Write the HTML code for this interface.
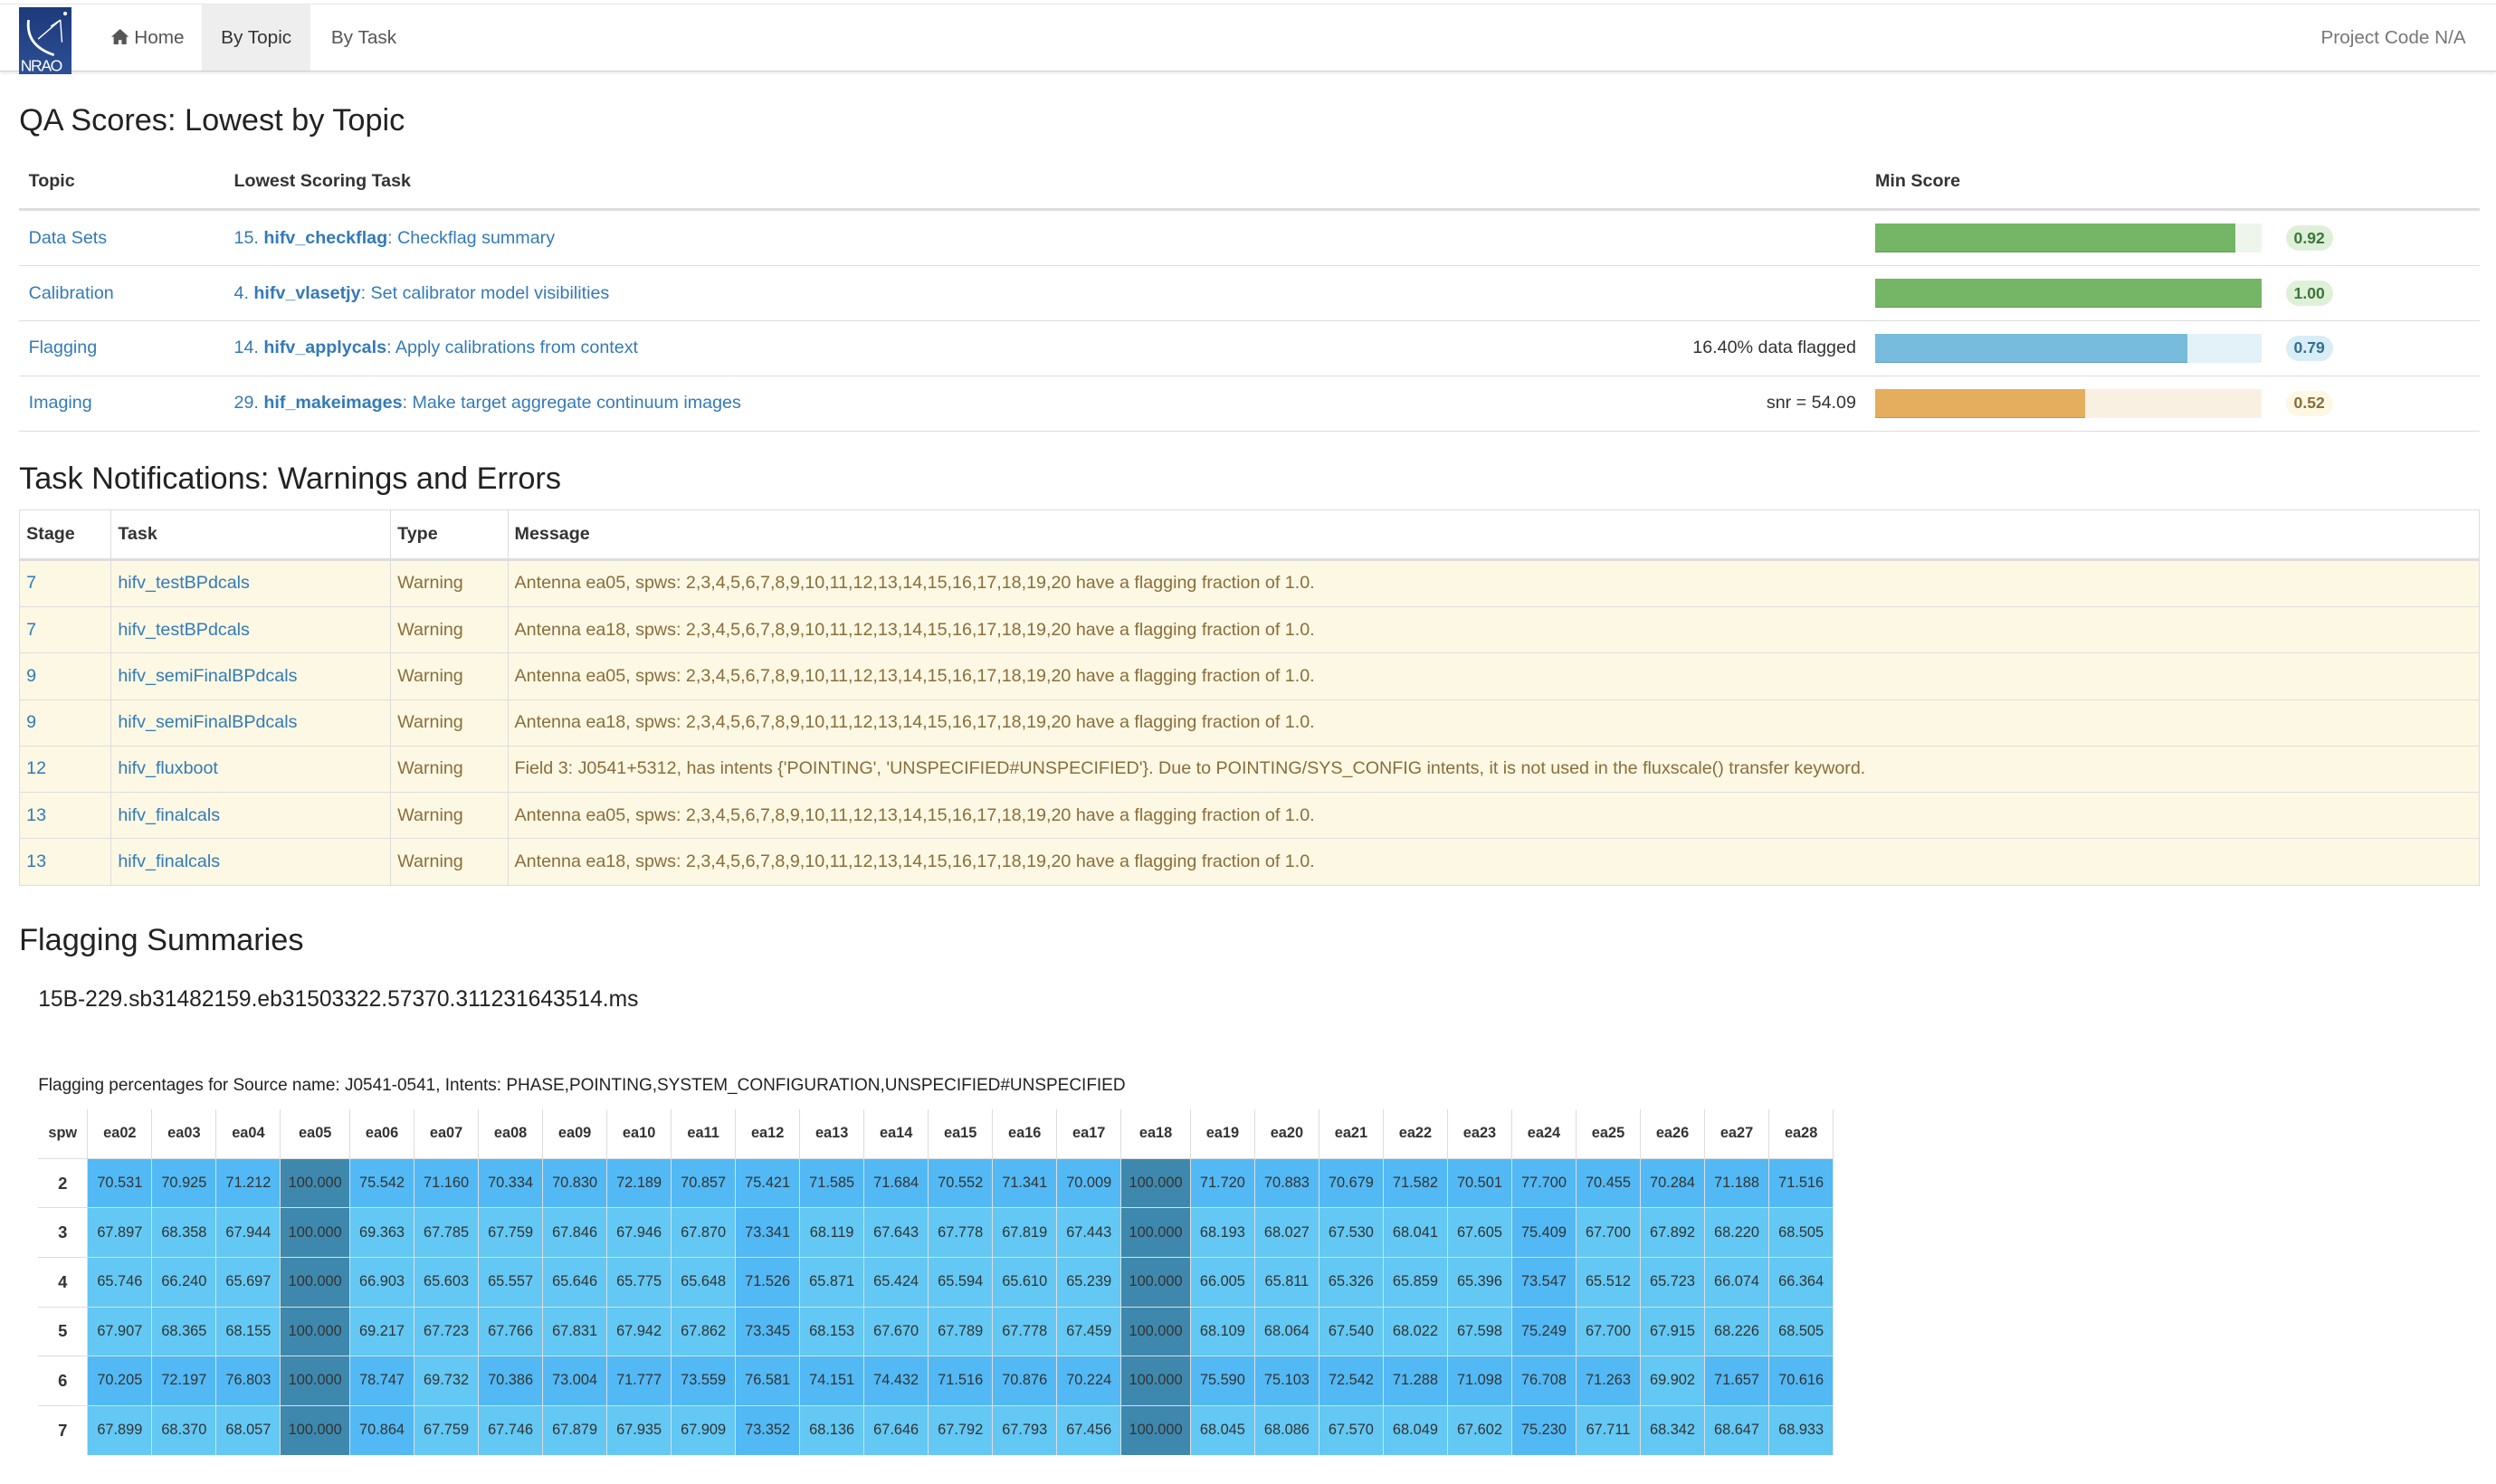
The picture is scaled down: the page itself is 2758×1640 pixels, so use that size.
<!DOCTYPE html>
<html><head><meta charset="utf-8">
<style>
html,body{margin:0;padding:0;background:#fff;}
body{zoom:1.7589;width:1568px;height:932px;position:relative;overflow:hidden;font-family:"Liberation Sans",Arial,sans-serif;color:#333;}
a{color:#337ab7;text-decoration:none}
.nav{position:absolute;left:0;top:2px;width:1568px;height:42px;border-top:1px solid #e5e5e5;border-bottom:1px solid #d0d0d0;box-shadow:0 1px 2px rgba(0,0,0,.1);}
.logo{position:absolute;left:12px;top:2px;width:33px;height:42px;background:linear-gradient(#1d3a7a,#2d4f95);}
.nav .it{position:absolute;top:0;height:42px;line-height:42px;font-size:11.8px;color:#555}
h2{position:absolute;margin:0;font-weight:normal;font-size:19.5px;color:#222;left:12px}
.qa{position:absolute;left:12px;top:97px;width:1546px;border-collapse:collapse;font-size:11.2px}
.qa th{text-align:left;height:34px;border-bottom:2px solid #ddd;padding:0 6px;font-size:11.2px}
.qa td{height:34px;border-bottom:1px solid #ddd;padding:0 6px;}
.bar{width:243px;height:18px;position:relative}
.bar i{position:absolute;left:0;top:0;bottom:0;border-bottom:1px solid rgba(0,0,0,.15)}
.badge{display:inline-block;border-radius:8px;padding:2px 5px;font-size:10px;font-weight:bold;margin-left:3px}
.nt{position:absolute;left:12px;top:320px;width:1546px;border-collapse:collapse;font-size:11.2px;border:1px solid #ddd}
.nt th{text-align:left;height:30px;border:1px solid #ddd;border-bottom:2px solid #ddd;padding:0 4px}
.nt td{height:28.6px;border:1px solid #ddd;padding:0 4px;background:#fcf8e3;color:#8a6d3b}
.ft{position:absolute;left:24px;top:697px;border-collapse:collapse;table-layout:fixed;width:1128px;font-size:9.3px;text-align:center}
.ft tr{height:31px}
.ft th{border:1px solid #ddd;border-top:none;font-weight:bold;padding:0}
.ft th:first-child{border-left:none}
.ft td{padding:0;border:1px solid #ddd;background:#63c8f3}
.ft td.d{background:#52b9f5}.ft td.h{background:#3e88ad}
.ft td.s{background:#fff;font-weight:bold;font-size:10.5px;border-left:none;border-bottom:1px solid #ddd}
.ft tr:last-child td{border-bottom:none}
</style></head><body>
<div class="nav">
 <div class="logo"><svg width="33" height="42" viewBox="0 0 33 42"><path d="M6 8 Q4 24 22 30" stroke="#fff" stroke-width="1.6" fill="none"/><path d="M12 20 L26 8 M26 8 L27 22 M20 12 L26 8" stroke="#fff" stroke-width="0.8" fill="none"/><circle cx="29" cy="4" r="1.2" fill="#fff"/><text x="1" y="40" font-size="10" fill="#fff" font-family="Liberation Sans" letter-spacing="-0.8">NRAO</text></svg></div>
 <div class="it" style="left:70px"><svg width="11" height="10" viewBox="0 0 11 10" style="vertical-align:-1px"><path d="M5.5 0 L11 5 L9.5 5 L9.5 10 L6.5 10 L6.5 7 L4.5 7 L4.5 10 L1.5 10 L1.5 5 L0 5Z" fill="#555"/></svg> Home</div>
 <div class="it" style="left:127px;width:68px;background:#eee;text-align:center;color:#333">By Topic</div>
 <div class="it" style="left:208px">By Task</div>
 <div class="it" style="left:1458px;color:#777">Project Code N/A</div>
</div>
<h2 style="top:65px">QA Scores: Lowest by Topic</h2>
<table class="qa">
<tr><th style="width:117px">Topic</th><th>Lowest Scoring Task</th><th></th><th style="width:243px">Min Score</th><th style="width:119px"></th></tr>
<tr><td><a>Data Sets</a></td><td><a>15. <b>hifv_checkflag</b>: Checkflag summary</a></td><td></td><td><div class="bar" style="background:#eef6ec"><i style="width:226px;background:#74b566"></i></div></td><td><span class="badge" style="background:#dff0d8;color:#3c763d">0.92</span></td></tr>
<tr><td><a>Calibration</a></td><td><a>4. <b>hifv_vlasetjy</b>: Set calibrator model visibilities</a></td><td></td><td><div class="bar"><i style="width:243px;background:#74b566"></i></div></td><td><span class="badge" style="background:#dff0d8;color:#3c763d">1.00</span></td></tr>
<tr><td><a>Flagging</a></td><td><a>14. <b>hifv_applycals</b>: Apply calibrations from context</a></td><td style="text-align:right">16.40% data flagged</td><td><div class="bar" style="background:#e3f1f8"><i style="width:196px;background:#77bcdc"></i></div></td><td><span class="badge" style="background:#d9edf7;color:#31708f">0.79</span></td></tr>
<tr><td><a>Imaging</a></td><td><a>29. <b>hif_makeimages</b>: Make target aggregate continuum images</a></td><td style="text-align:right">snr = 54.09</td><td><div class="bar" style="background:#faf0e2"><i style="width:132px;background:#e5ae5e"></i></div></td><td><span class="badge" style="background:#fcf8e3;color:#8a6d3b">0.52</span></td></tr>
</table>
<h2 style="top:290px">Task Notifications: Warnings and Errors</h2>
<table class="nt">
<tr><th style="width:49px">Stage</th><th style="width:167px">Task</th><th style="width:65px">Type</th><th>Message</th></tr>
<tr><td><a>7</a></td><td><a>hifv_testBPdcals</a></td><td>Warning</td><td>Antenna ea05, spws: 2,3,4,5,6,7,8,9,10,11,12,13,14,15,16,17,18,19,20 have a flagging fraction of 1.0.</td></tr>
<tr><td><a>7</a></td><td><a>hifv_testBPdcals</a></td><td>Warning</td><td>Antenna ea18, spws: 2,3,4,5,6,7,8,9,10,11,12,13,14,15,16,17,18,19,20 have a flagging fraction of 1.0.</td></tr>
<tr><td><a>9</a></td><td><a>hifv_semiFinalBPdcals</a></td><td>Warning</td><td>Antenna ea05, spws: 2,3,4,5,6,7,8,9,10,11,12,13,14,15,16,17,18,19,20 have a flagging fraction of 1.0.</td></tr>
<tr><td><a>9</a></td><td><a>hifv_semiFinalBPdcals</a></td><td>Warning</td><td>Antenna ea18, spws: 2,3,4,5,6,7,8,9,10,11,12,13,14,15,16,17,18,19,20 have a flagging fraction of 1.0.</td></tr>
<tr><td><a>12</a></td><td><a>hifv_fluxboot</a></td><td>Warning</td><td>Field 3: J0541+5312, has intents {'POINTING', 'UNSPECIFIED#UNSPECIFIED'}. Due to POINTING/SYS_CONFIG intents, it is not used in the fluxscale() transfer keyword.</td></tr>
<tr><td><a>13</a></td><td><a>hifv_finalcals</a></td><td>Warning</td><td>Antenna ea05, spws: 2,3,4,5,6,7,8,9,10,11,12,13,14,15,16,17,18,19,20 have a flagging fraction of 1.0.</td></tr>
<tr><td><a>13</a></td><td><a>hifv_finalcals</a></td><td>Warning</td><td>Antenna ea18, spws: 2,3,4,5,6,7,8,9,10,11,12,13,14,15,16,17,18,19,20 have a flagging fraction of 1.0.</td></tr>
</table>
<h2 style="top:580px">Flagging Summaries</h2>
<div style="position:absolute;left:24px;top:620px;font-size:14px;color:#222">15B-229.sb31482159.eb31503322.57370.311231643514.ms</div>
<div style="position:absolute;left:24px;top:676px;font-size:10.8px;color:#222">Flagging percentages for Source name: J0541-0541, Intents: PHASE,POINTING,SYSTEM_CONFIGURATION,UNSPECIFIED#UNSPECIFIED</div>
<table class="ft">
<colgroup><col style="width:31px"><col span="3" style="width:40.3px"><col style="width:43.5px"><col span="12" style="width:40.3px"><col style="width:43.5px"><col span="10" style="width:40.3px"></colgroup>
<tr><th>spw</th><th>ea02</th><th>ea03</th><th>ea04</th><th>ea05</th><th>ea06</th><th>ea07</th><th>ea08</th><th>ea09</th><th>ea10</th><th>ea11</th><th>ea12</th><th>ea13</th><th>ea14</th><th>ea15</th><th>ea16</th><th>ea17</th><th>ea18</th><th>ea19</th><th>ea20</th><th>ea21</th><th>ea22</th><th>ea23</th><th>ea24</th><th>ea25</th><th>ea26</th><th>ea27</th><th>ea28</th></tr>
<tr><td class="s">2</td><td class="d">70.531</td><td class="d">70.925</td><td class="d">71.212</td><td class="h">100.000</td><td class="d">75.542</td><td class="d">71.160</td><td class="d">70.334</td><td class="d">70.830</td><td class="d">72.189</td><td class="d">70.857</td><td class="d">75.421</td><td class="d">71.585</td><td class="d">71.684</td><td class="d">70.552</td><td class="d">71.341</td><td class="d">70.009</td><td class="h">100.000</td><td class="d">71.720</td><td class="d">70.883</td><td class="d">70.679</td><td class="d">71.582</td><td class="d">70.501</td><td class="d">77.700</td><td class="d">70.455</td><td class="d">70.284</td><td class="d">71.188</td><td class="d">71.516</td></tr>
<tr><td class="s">3</td><td>67.897</td><td>68.358</td><td>67.944</td><td class="h">100.000</td><td>69.363</td><td>67.785</td><td>67.759</td><td>67.846</td><td>67.946</td><td>67.870</td><td class="d">73.341</td><td>68.119</td><td>67.643</td><td>67.778</td><td>67.819</td><td>67.443</td><td class="h">100.000</td><td>68.193</td><td>68.027</td><td>67.530</td><td>68.041</td><td>67.605</td><td class="d">75.409</td><td>67.700</td><td>67.892</td><td>68.220</td><td>68.505</td></tr>
<tr><td class="s">4</td><td>65.746</td><td>66.240</td><td>65.697</td><td class="h">100.000</td><td>66.903</td><td>65.603</td><td>65.557</td><td>65.646</td><td>65.775</td><td>65.648</td><td class="d">71.526</td><td>65.871</td><td>65.424</td><td>65.594</td><td>65.610</td><td>65.239</td><td class="h">100.000</td><td>66.005</td><td>65.811</td><td>65.326</td><td>65.859</td><td>65.396</td><td class="d">73.547</td><td>65.512</td><td>65.723</td><td>66.074</td><td>66.364</td></tr>
<tr><td class="s">5</td><td>67.907</td><td>68.365</td><td>68.155</td><td class="h">100.000</td><td>69.217</td><td>67.723</td><td>67.766</td><td>67.831</td><td>67.942</td><td>67.862</td><td class="d">73.345</td><td>68.153</td><td>67.670</td><td>67.789</td><td>67.778</td><td>67.459</td><td class="h">100.000</td><td>68.109</td><td>68.064</td><td>67.540</td><td>68.022</td><td>67.598</td><td class="d">75.249</td><td>67.700</td><td>67.915</td><td>68.226</td><td>68.505</td></tr>
<tr><td class="s">6</td><td class="d">70.205</td><td class="d">72.197</td><td class="d">76.803</td><td class="h">100.000</td><td class="d">78.747</td><td>69.732</td><td class="d">70.386</td><td class="d">73.004</td><td class="d">71.777</td><td class="d">73.559</td><td class="d">76.581</td><td class="d">74.151</td><td class="d">74.432</td><td class="d">71.516</td><td class="d">70.876</td><td class="d">70.224</td><td class="h">100.000</td><td class="d">75.590</td><td class="d">75.103</td><td class="d">72.542</td><td class="d">71.288</td><td class="d">71.098</td><td class="d">76.708</td><td class="d">71.263</td><td>69.902</td><td class="d">71.657</td><td class="d">70.616</td></tr>
<tr><td class="s">7</td><td>67.899</td><td>68.370</td><td>68.057</td><td class="h">100.000</td><td class="d">70.864</td><td>67.759</td><td>67.746</td><td>67.879</td><td>67.935</td><td>67.909</td><td class="d">73.352</td><td>68.136</td><td>67.646</td><td>67.792</td><td>67.793</td><td>67.456</td><td class="h">100.000</td><td>68.045</td><td>68.086</td><td>67.570</td><td>68.049</td><td>67.602</td><td class="d">75.230</td><td>67.711</td><td>68.342</td><td>68.647</td><td>68.933</td></tr>
</table>
</body></html>
